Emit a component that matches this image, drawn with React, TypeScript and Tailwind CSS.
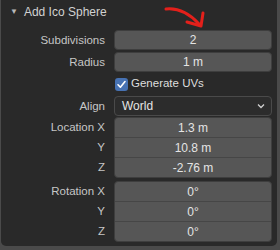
import React from "react";

const font = { fontFamily: '"Liberation Sans", Arial, sans-serif' };

function Label({ children }: { children: React.ReactNode }) {
  return (
    <div className="w-[104px] shrink-0 text-right text-[11.5px] leading-[20px] text-[#c6c6c6]">
      {children}
    </div>
  );
}

function NumRow({ label, value }: { label: string; value: string }) {
  return (
    <div className="flex h-[20px] items-center">
      <Label>{label}</Label>
      <div className="ml-[9px] flex h-[20px] w-[158px] items-center justify-center rounded-[4px] border border-[#3e3e3e] bg-[#565656] text-[12px] text-[#e4e4e4]">
        {value}
      </div>
    </div>
  );
}

function Group({ labels, values }: { labels: string[]; values: string[] }) {
  return (
    <div className="flex">
      <div className="flex flex-col">
        {labels.map((l, i) => (
          <div key={i} className="h-[20px]">
            <Label>{l}</Label>
          </div>
        ))}
      </div>
      <div className="ml-[9px] flex w-[158px] flex-col overflow-hidden rounded-[4px] border border-[#3e3e3e] bg-[#565656]">
        {values.map((v, i) => (
          <div
            key={i}
            className={
              i === 0
                ? "flex h-[19px] items-center justify-center text-[12px] text-[#e4e4e4]"
                : "flex h-[20px] items-center justify-center border-t border-[#464646] text-[12px] text-[#e4e4e4]"
            }
          >
            {v}
          </div>
        ))}
      </div>
    </div>
  );
}

export default function App() {
  return (
    <div className="h-[250px] w-[280px] overflow-hidden bg-[#4a4a4a]" style={font}>
      <div className="relative ml-px h-[246px] w-[276px] rounded-b-[5px] bg-[#292929]">
        <div className="flex h-[30px] items-start pl-[9px] pt-[3px] text-[12px] leading-[18px] text-[#d2d2d2]">
          <span className="mr-[6px] text-[8px] text-[#b8b8b8]">▼</span>
          <span>Add Ico Sphere</span>
        </div>
        <div className="flex flex-col">
          <NumRow label="Subdivisions" value="2" />
          <div className="h-[2px]" />
          <NumRow label="Radius" value="1 m" />
          <div className="h-[2px]" />
          <div className="flex h-[20px] items-center">
            <div className="w-[104px] shrink-0" />
            <div className="ml-[10px] flex items-center">
              <div className="flex h-[13px] w-[13px] items-center justify-center rounded-[3px] bg-[#4772b3]">
                <svg width="11" height="11" viewBox="0 0 11 11">
                  <path d="M2 5.8 L4.4 8.2 L9 2.6" stroke="#fff" strokeWidth="1.6" fill="none" strokeLinecap="round" strokeLinejoin="round" />
                </svg>
              </div>
              <span className="ml-[3px] text-[11.5px] text-[#dedede]">Generate UVs</span>
            </div>
          </div>
          <div className="h-[2px]" />
          <div className="flex h-[20px] items-center">
            <Label>Align</Label>
            <div className="ml-[9px] flex h-[20px] w-[158px] items-center justify-between rounded-[4px] border border-[#4a4a4a] bg-[#2c2c2c] pl-[7px] pr-[6px] text-[12px] text-[#e4e4e4]">
              <span>World</span>
              <svg width="8" height="6" viewBox="0 0 8 6">
                <path d="M1 1.5 L4 4.5 L7 1.5" stroke="#d0d0d0" strokeWidth="1.3" fill="none" />
              </svg>
            </div>
          </div>
          <div className="h-px" />
          <Group labels={["Location X", "Y", "Z"]} values={["1.3 m", "10.8 m", "-2.76 m"]} />
          <div className="h-[3px]" />
          <Group labels={["Rotation X", "Y", "Z"]} values={["0°", "0°", "0°"]} />
        </div>
        <svg className="absolute left-[160px] top-[4px]" width="48" height="28" viewBox="0 0 48 28">
          <path d="M5 5 C14 4, 26 7, 38 20" stroke="#e3201b" strokeWidth="3" fill="none" strokeLinecap="round" />
          <path d="M42 9 L40 22 L26 18" stroke="#e3201b" strokeWidth="3" fill="none" strokeLinecap="round" strokeLinejoin="round" />
        </svg>
      </div>
    </div>
  );
}
